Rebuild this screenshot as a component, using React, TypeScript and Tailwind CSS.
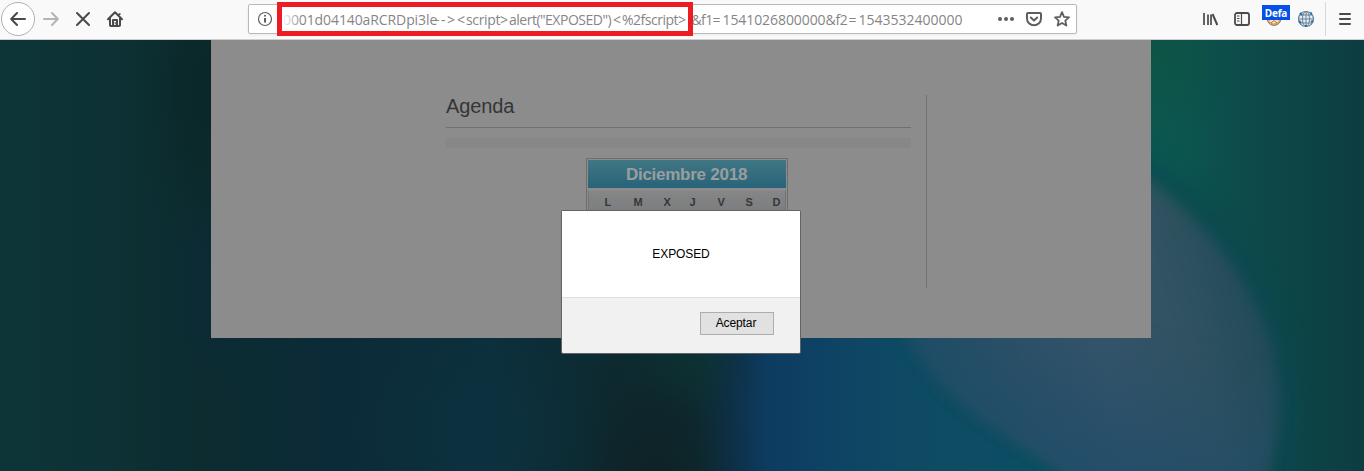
import React from "react";

const glows = [
  { id: "g1", cx: 205, cy: 90, rx: 75, ry: 190, color: "#0b2626", a: 0.75 },
  { id: "g2", cx: 215, cy: 290, rx: 60, ry: 120, color: "#0c2940", a: 0.4 },
  { id: "g3", cx: 480, cy: 430, rx: 130, ry: 130, color: "#0d3340", a: 0.5 },
  { id: "g4", cx: 690, cy: 355, rx: 75, ry: 75, color: "#0d3634", a: 0.6 },
  { id: "g5", cx: 655, cy: 470, rx: 95, ry: 140, color: "#0e2227", a: 0.9 },
  { id: "g6", cx: 1155, cy: 60, rx: 95, ry: 110, color: "#0e5544", a: 0.8 },
  { id: "g7", cx: 1160, cy: 150, rx: 90, ry: 90, color: "#0b5a50", a: 0.6 },
];

const lensPath = "M1100 154C1190 192 1279 300 1279 393C1279 430 1274 455 1260 490L1090 490C1030 440 940 410 907 330L900 180Z";

function Backdrop() {
  return (
    <svg className="absolute inset-0 h-full w-full" viewBox="0 40 1364 431" preserveAspectRatio="none" aria-hidden="true">
      <defs>
        <linearGradient id="base" gradientUnits="userSpaceOnUse" x1="0" y1="0" x2="1364" y2="0">
          <stop offset="0" stopColor="#0d3537" />
          <stop offset=".08" stopColor="#0d3134" />
          <stop offset=".15" stopColor="#0c2c30" />
          <stop offset=".25" stopColor="#0c2b39" />
          <stop offset=".36" stopColor="#0c2f3c" />
          <stop offset=".45" stopColor="#0d2a30" />
          <stop offset=".51" stopColor="#0d2c31" />
          <stop offset=".535" stopColor="#0d3048" />
          <stop offset=".565" stopColor="#0d3c61" />
          <stop offset=".61" stopColor="#0e4364" />
          <stop offset=".67" stopColor="#0e4b63" />
          <stop offset=".76" stopColor="#0d4e63" />
          <stop offset=".85" stopColor="#0c5250" />
          <stop offset=".92" stopColor="#0d4a4a" />
          <stop offset="1" stopColor="#0d3c41" />
        </linearGradient>
        <linearGradient id="lens" gradientUnits="userSpaceOnUse" x1="930" y1="420" x2="1285" y2="330">
          <stop offset="0" stopColor="#1d4e63" />
          <stop offset=".25" stopColor="#2d5166" />
          <stop offset=".5" stopColor="#37556a" />
          <stop offset=".75" stopColor="#305260" />
          <stop offset="1" stopColor="#1e4955" />
        </linearGradient>
        <linearGradient id="lensLow" gradientUnits="userSpaceOnUse" x1="1150" y1="330" x2="1110" y2="480">
          <stop offset="0" stopColor="#1f4c6a" stopOpacity="0" />
          <stop offset="1" stopColor="#1f4c6a" stopOpacity=".8" />
        </linearGradient>
        {glows.map((g) => (
          <radialGradient key={g.id} id={g.id}>
            <stop offset="0" stopColor={g.color} stopOpacity={g.a} />
            <stop offset=".35" stopColor={g.color} stopOpacity={g.a * 0.75} />
            <stop offset=".7" stopColor={g.color} stopOpacity={g.a * 0.2} />
            <stop offset="1" stopColor={g.color} stopOpacity="0" />
          </radialGradient>
        ))}
        <filter id="soft" colorInterpolationFilters="sRGB" x="-20%" y="-20%" width="140%" height="140%"><feGaussianBlur stdDeviation="10" /></filter>
        <filter id="edge" colorInterpolationFilters="sRGB"><feGaussianBlur stdDeviation="7" /></filter>
      </defs>
      <rect y="40" width="1364" height="431" fill="url(#base)" />
      {glows.map((g) => (
        <ellipse key={g.id} cx={g.cx} cy={g.cy} rx={g.rx} ry={g.ry} fill={`url(#${g.id})`} />
      ))}
      <path d="M1130 160C1210 200 1278 300 1286 390C1288 430 1286 460 1276 500" fill="none" stroke="#0c4854" strokeWidth="22" opacity=".65" filter="url(#soft)" />
      <path d={lensPath} fill="url(#lens)" filter="url(#edge)" />
      <path d={lensPath} fill="url(#lensLow)" filter="url(#edge)" />
    </svg>
  );
}

function BackIcon({ className }: { className: string }) {
  return (
    <svg width="16" height="16" viewBox="0 0 16 16" className={className} fill="none" stroke="currentColor" strokeWidth="2" strokeLinecap="round" strokeLinejoin="round">
      <path d="M15 8H1.5M7 2L1.2 8L7 14" />
    </svg>
  );
}

const urlParts = [
  { text: "0001d04140aRCRDpi3le", cls: "w-[152px] tracking-[-0.1px]" },
  { text: "--", cls: "w-[12px] tracking-[1.6px]" },
  { text: ">", cls: "w-[10px]" },
  { text: "<", cls: "w-[9px]" },
  { text: "script", cls: "w-[34px] tracking-[-0.35px]" },
  { text: ">", cls: "w-[9px]" },
  { text: 'alert("EXPOSED")', cls: "w-[104px] tracking-[-0.5px]" },
  { text: "<", cls: "w-[9px]" },
  { text: "%2fscript", cls: "w-[56px] tracking-[-0.5px]" },
  { text: ">", cls: "w-[13.5px]" },
  { text: "&f1", cls: "w-[21px] tracking-[-0.6px]" },
  { text: "=", cls: "w-[10px]" },
  { text: "1541026800000", cls: "w-[103px] tracking-[-0.08px]" },
  { text: "&f2", cls: "w-[23px] tracking-[-0.3px]" },
  { text: "=", cls: "w-[10px]" },
  { text: "1543532400000", cls: "w-[104px]" },
];

function Toolbar() {
  return (
    <header className="flex h-10 shrink-0 border-b border-[#cfcfd0] bg-[#f9f9fa] text-[#4a4a4c]">
      <nav className="flex w-[248px] shrink-0 items-center pb-px pl-px">
        <div className="flex h-[34px] w-[34px] items-center justify-center rounded-full border border-[#b1b1b3] bg-white">
          <BackIcon className="" />
        </div>
        <BackIcon className="ml-2 rotate-180 text-[#b4b4b6]" />
        <svg width="16" height="16" viewBox="0 0 16 16" className="ml-4" fill="none" stroke="currentColor" strokeWidth="2" strokeLinecap="round">
          <path d="M2 2L14 14M14 2L2 14" />
        </svg>
        <svg width="16" height="16" viewBox="0 0 16 16" className="ml-4" fill="none" stroke="currentColor" strokeWidth="2" strokeLinecap="round" strokeLinejoin="round">
          <path d="M1 8.2L8 1.2L15 8.2M3 7.5V14.2Q3 15 4 15H12Q13 15 13 14.2V7.5" />
          <path d="M6 14.5V9H10V14.5M12.5 2.2V4" strokeLinecap="butt" />
          <path d="M8.2 11.5V13" strokeWidth="1" />
        </svg>
      </nav>
      <div className="relative mt-1 flex h-[30px] w-[829px] shrink-0 items-center rounded-[2px] border border-[#b9b9ba] bg-white shadow-[0_1px_3px_rgba(0,0,0,0.06)]">
        <svg width="16" height="16" viewBox="0 0 16 16" className="ml-2" fill="none" stroke="#5e5e60">
          <circle cx="8" cy="8" r="6.5" strokeWidth="1.2" />
          <path d="M8 7V11.5" strokeWidth="2" />
          <circle cx="8" cy="4.7" r="1" fill="#5e5e60" stroke="none" />
        </svg>
        <div className="ml-[10px] flex w-[710px] shrink-0 whitespace-pre pt-[2px] font-['Open_Sans','Noto_Sans',sans-serif] text-[14px] leading-5 text-[#858587]">
          {urlParts.map((p, i) => (
            <span key={i} className={`${p.cls} shrink-0`}>{p.text}</span>
          ))}
        </div>
        <div className="pointer-events-none absolute left-[33px] top-1 h-5 w-5 bg-linear-to-r from-white to-transparent" />
        <svg width="16" height="16" viewBox="0 0 16 16" className="ml-[5px]" fill="#5e5e60">
          <circle cx="2" cy="8" r="2" /><circle cx="8" cy="8" r="2" /><circle cx="14" cy="8" r="2" />
        </svg>
        <svg width="16" height="16" viewBox="0 0 16 16" className="ml-3" fill="none" stroke="#5e5e60" strokeWidth="2" strokeLinecap="round" strokeLinejoin="round">
          <path d="M2 2H14Q15 2 15 3V7.5A7 6.8 0 0 1 1 7.5V3Q1 2 2 2ZM4.8 6.5L8 9.5L11.2 6.5" />
        </svg>
        <svg width="16" height="16" viewBox="0 0 16 16" className="ml-3" fill="none" stroke="#5e5e60" strokeWidth="1.8" strokeLinejoin="round">
          <path d="M8 1.2L10 5.8L15 6.3L11.3 9.6L12.4 14.6L8 12L3.6 14.6L4.7 9.6L1 6.3L6 5.8Z" />
        </svg>
        <div className="absolute -top-[3px] left-[28px] h-[34px] w-[416px] border-[5px] border-[#ed1c24]" />
      </div>
      <div className="flex flex-1 items-center justify-end pb-px pr-[11px]">
        <svg width="16" height="16" viewBox="0 0 16 16" fill="none" stroke="currentColor" strokeWidth="2">
          <path d="M2 2V14M6 3.5V14M9 3.5V14" strokeWidth="1.7" /><path d="M10.5 3L15.3 14" />
        </svg>
        <svg width="16" height="16" viewBox="0 0 16 16" className="ml-4" fill="none" stroke="currentColor" strokeWidth="1.8">
          <rect x="1" y="2" width="14" height="12" rx="2" /><path d="M7.5 2V14" strokeWidth="1.2" /><path d="M3 5H5.5M3 7.5H5.5M3 10H5.5" strokeWidth="1" />
        </svg>
        <div className="relative ml-4 h-4 w-4">
          <svg width="16" height="16" viewBox="0 0 16 16">
            <circle cx="8" cy="7.5" r="7" fill="#eda04e" stroke="#8a8580" /><path d="M3 10Q8 6 13 10Q10 13 6 12Z" fill="#f7e5cf" /><path d="M5 12L8 9.5L11 12" fill="none" stroke="#9a7450" />
          </svg>
          <span className="absolute -left-[4px] -top-[6px] flex h-[15px] w-7 items-center justify-center bg-[#0550e6] font-['Open_Sans',sans-serif] text-[10px] font-bold leading-none tracking-[-0.2px] text-white">Defa</span>
        </div>
        <svg width="18" height="18" viewBox="0 0 18 18" className="ml-[15px]" fill="none" stroke="#6c8193">
          <circle cx="9" cy="9" r="7.5" fill="#e5edf4" strokeWidth="1.2" />
          <ellipse cx="9" cy="9" rx="3.5" ry="7.5" /><path d="M1.5 9H16.5M3 5H15M3 13H15M9 1.5V16.5" />
          <path d="M3 3L5 5M13 4L15 3M2 11L4 13M14 12L16 11M8 16H10" stroke="#2372b4" strokeWidth="2.2" />
        </svg>
        <div className="ml-[10px] h-[34px] w-px bg-[#d7d7db]" />
        <svg width="16" height="16" viewBox="0 0 16 16" className="ml-[11px]" stroke="currentColor" strokeWidth="2" strokeLinecap="round">
          <path d="M3 3H13M3 8H13M3 13H13" />
        </svg>
      </div>
    </header>
  );
}

const weekdays = [
  { d: "L", cls: "w-[29px]" },
  { d: "M", cls: "w-[30px]" },
  { d: "X", cls: "w-[26px]" },
  { d: "J", cls: "w-[28px]" },
  { d: "V", cls: "w-[28px]" },
  { d: "S", cls: "w-[27px]" },
  { d: "D", cls: "w-[10px]" },
];

function Calendar() {
  return (
    <div className="mx-auto mt-[10px] h-[75px] w-[202px] translate-x-[8px] border border-[#6d6d6d] p-px">
      <div className="flex h-7 items-center justify-center bg-linear-to-b from-[#417784] to-[#28637a] pt-px text-[17px] font-bold tracking-[-0.25px] text-[#9b9d9e]">Diciembre 2018</div>
      <div className="mt-[3px] flex h-10 border-x border-[#747474] bg-linear-to-b from-[#868686] to-[#717578] pl-4 pt-[3px] text-[11px] font-bold leading-4 text-[#34373b]">
        {weekdays.map((w) => <span key={w.d} className={`${w.cls} shrink-0`}>{w.d}</span>)}
      </div>
    </div>
  );
}

function AlertDialog() {
  return (
    <div role="alertdialog" className="absolute left-[561px] top-[170px] flex h-[144px] w-[240px] flex-col rounded-[2px] border border-[#626364] bg-[#f1f1f1] text-[12px] tracking-[-0.1px] text-black">
      <div className="flex h-[86px] items-center justify-center bg-white">EXPOSED</div>
      <div className="flex flex-1 justify-end border-t border-[#dfdfdf] pr-[26px] pt-[14px]">
        <button className="h-[23px] w-[74px] border border-[#adadad] bg-[#e1e1e1] pb-[2px] pr-[2px]">Aceptar</button>
      </div>
    </div>
  );
}

export default function App() {
  return (
    <div className="flex h-[471px] w-[1364px] flex-col overflow-hidden font-['Liberation_Sans',Arial,sans-serif]">
      <Toolbar />
      <main className="relative flex-1 overflow-hidden bg-[#0d3035]">
        <Backdrop />
        <div className="relative ml-[211px] flex h-[298px] w-[940px] bg-[#8c8c8c] pl-[235px] pt-[55px]">
          <section className="w-[465px]">
            <h1 className="h-[33px] border-b border-[#707070] text-[20px] leading-[22px] tracking-[-0.1px] text-[#343536]">Agenda</h1>
            <div className="mt-[10px] h-[10px] bg-[#878787]" />
            <Calendar />
          </section>
          <aside className="ml-[15px] h-[193px] border-l border-[#717171]" />
        </div>
        <AlertDialog />
      </main>
    </div>
  );
}
